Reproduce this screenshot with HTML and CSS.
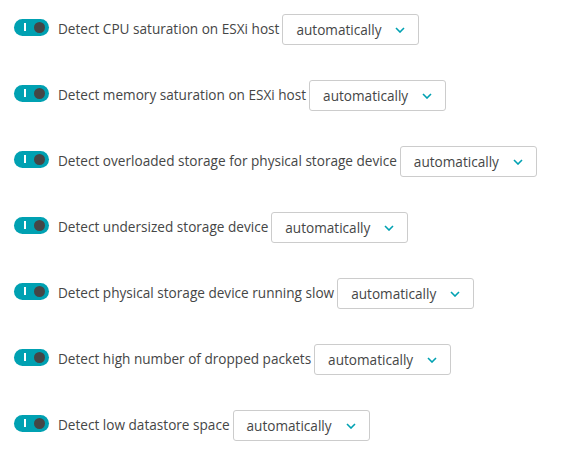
FILE: index.html
```html
<!DOCTYPE html>
<html>
<head>
<meta charset="utf-8">
<link rel="stylesheet" href="styles.css">
</head>
<body>
<div class="list">
  <div class="row"><span class="toggle"><span class="bar"></span><span class="knob"></span></span><span class="label">Detect CPU saturation on ESXi host</span><button class="select">automatically<svg class="chev" viewBox="0 0 10 6" width="10" height="6"><path d="M1 1l4 4 4-4" fill="none" stroke="#00a1b2" stroke-width="1.6"/></svg></button></div>
  <div class="row"><span class="toggle"><span class="bar"></span><span class="knob"></span></span><span class="label">Detect memory saturation on ESXi host</span><button class="select">automatically<svg class="chev" viewBox="0 0 10 6" width="10" height="6"><path d="M1 1l4 4 4-4" fill="none" stroke="#00a1b2" stroke-width="1.6"/></svg></button></div>
  <div class="row"><span class="toggle"><span class="bar"></span><span class="knob"></span></span><span class="label">Detect overloaded storage for physical storage device</span><button class="select">automatically<svg class="chev" viewBox="0 0 10 6" width="10" height="6"><path d="M1 1l4 4 4-4" fill="none" stroke="#00a1b2" stroke-width="1.6"/></svg></button></div>
  <div class="row"><span class="toggle"><span class="bar"></span><span class="knob"></span></span><span class="label">Detect undersized storage device</span><button class="select">automatically<svg class="chev" viewBox="0 0 10 6" width="10" height="6"><path d="M1 1l4 4 4-4" fill="none" stroke="#00a1b2" stroke-width="1.6"/></svg></button></div>
  <div class="row"><span class="toggle"><span class="bar"></span><span class="knob"></span></span><span class="label">Detect physical storage device running slow</span><button class="select">automatically<svg class="chev" viewBox="0 0 10 6" width="10" height="6"><path d="M1 1l4 4 4-4" fill="none" stroke="#00a1b2" stroke-width="1.6"/></svg></button></div>
  <div class="row"><span class="toggle"><span class="bar"></span><span class="knob"></span></span><span class="label">Detect high number of dropped packets</span><button class="select">automatically<svg class="chev" viewBox="0 0 10 6" width="10" height="6"><path d="M1 1l4 4 4-4" fill="none" stroke="#00a1b2" stroke-width="1.6"/></svg></button></div>
  <div class="row"><span class="toggle"><span class="bar"></span><span class="knob"></span></span><span class="label">Detect low datastore space</span><button class="select">automatically<svg class="chev" viewBox="0 0 10 6" width="10" height="6"><path d="M1 1l4 4 4-4" fill="none" stroke="#00a1b2" stroke-width="1.6"/></svg></button></div>
</div>
</body>
</html>
```
FILE: styles.css
```css
body {
  margin: 0;
  background: #fff;
  font-family: "Open Sans", sans-serif;
  font-size: 13.6px;
  color: #454646;
}
.list {
  display: flex;
  flex-direction: column;
  gap: 35px;
  padding: 14px 0 0 14px;
}
.row {
  display: flex;
  align-items: center;
  height: 31px;
}
.toggle {
  position: relative;
  width: 35px;
  height: 17px;
  border-radius: 9px;
  background: #00a1b2;
  flex: none;
  margin: 0 9px 4px 0;
}
.bar {
  position: absolute;
  left: 10px;
  top: 4px;
  width: 2px;
  height: 8px;
  background: #fff;
}
.knob {
  position: absolute;
  right: 4px;
  top: 3px;
  width: 11px;
  height: 11px;
  border-radius: 50%;
  background: #454646;
}
.label {
  margin: 0 3px 2px 0;
}
.select {
  display: flex;
  align-items: center;
  height: 31px;
  padding: 0 13px;
  border: 1px solid #cccccc;
  border-radius: 3px;
  background: #fff;
  font: inherit;
  color: #454646;
  gap: 14px;
}
.chev {
  display: block;
}
```
